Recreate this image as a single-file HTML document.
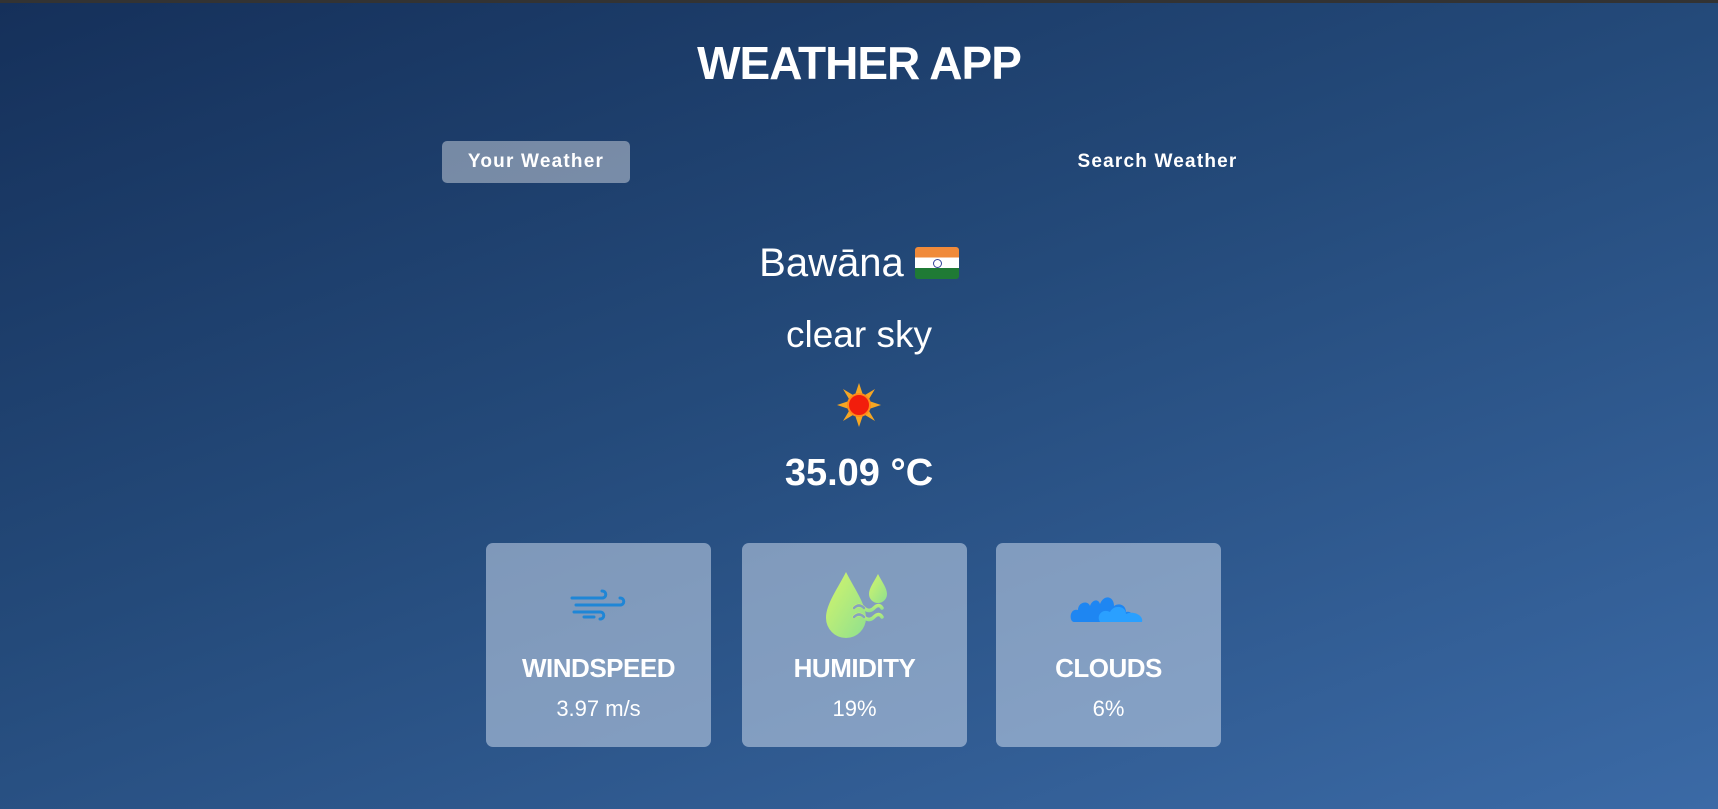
<!DOCTYPE html>
<html><head><meta charset="utf-8"><style>
html,body{margin:0;padding:0;width:1718px;height:809px;overflow:hidden;box-sizing:border-box}
body{background:linear-gradient(160deg,#15305a 0%,#244a7a 45%,#3b6aa6 100%);font-family:"Liberation Sans",sans-serif;color:#fff;position:relative;border-top:3px solid #333}
.a{position:absolute;left:0;width:1718px;text-align:center}
h1{margin:0;font-size:46px;font-weight:bold;letter-spacing:-1px}
.btn{position:absolute;left:442px;top:138px;width:188px;height:42px;border-radius:5px;background:rgba(255,255,255,0.4);font-size:19px;letter-spacing:1.2px;line-height:42px;text-align:center;font-weight:bold}
.srch{position:absolute;left:1040px;top:138px;width:235px;line-height:42px;font-size:19px;letter-spacing:1.2px;text-align:center;font-weight:bold}
.card{position:absolute;top:540px;width:225px;height:204px;border-radius:7px;background:rgba(200,215,235,0.55);text-align:center}
.card .l{position:absolute;top:110px;width:100%;font-size:26px;font-weight:bold;letter-spacing:-0.5px}
.card .v{position:absolute;top:153px;width:100%;font-size:22px}
.card svg{position:absolute;left:0;right:0;margin:auto}
</style></head><body>
<div class="a" style="top:33px"><h1>WEATHER APP</h1></div>
<div class="btn">Your Weather</div>
<div class="srch">Search Weather</div>
<div class="a" style="top:238px;font-size:40px">Bawāna <span style="display:inline-block;width:44px;height:32px;vertical-align:-3px;background:linear-gradient(#f08a3a 0 33%,#fff 33% 66%,#1f7a35 66%);border-radius:3px;position:relative"><span style="position:absolute;left:18px;top:12px;width:7px;height:7px;border:1px solid #33449a;border-radius:50%"></span></span></div>
<div class="a" style="top:311px;font-size:37px">clear sky</div>
<div class="a" style="top:380px"><svg width="44" height="44" viewBox="0 0 44 44"><g fill="#f5a623"><polygon points="22,0 26,12 18,12"/><polygon points="22,44 26,32 18,32"/><polygon points="0,22 12,18 12,26"/><polygon points="44,22 32,18 32,26"/><polygon points="6,6 16,12 12,16"/><polygon points="38,38 28,32 32,28"/><polygon points="38,6 32,16 28,12"/><polygon points="6,38 12,28 16,32"/></g><circle cx="22" cy="22" r="11" fill="#f21d0c"/><circle cx="22" cy="22" r="11" fill="none" stroke="#ff8a1a" stroke-width="2"/></svg></div>
<div class="a" style="top:449px;font-size:38px;font-weight:bold">35.09 °C</div>

<div class="card" style="left:486px">
<svg style="top:45px" width="58" height="36" viewBox="0 0 58 36" fill="none" stroke="#1f86d6" stroke-width="3" stroke-linecap="round"><path d="M2 10h30c5 0 5-7 0-7"/><path d="M6 17h44c5 0 5-7 0-7"/><path d="M4 24h26c5 0 5 7 0 7"/><path d="M14 29h10"/></svg>
<div class="l">WINDSPEED</div><div class="v">3.97 m/s</div></div>

<div class="card" style="left:742px">
<svg style="top:27px" width="70" height="70" viewBox="0 0 70 70"><defs><linearGradient id="g" x1="0" y1="0" x2="1" y2="1"><stop offset="0" stop-color="#d4f56a"/><stop offset="1" stop-color="#8fe08f"/></linearGradient></defs><path d="M26 2C18 18 6 34 6 48a20 20 0 0 0 40 0C46 34 34 18 26 2z" fill="url(#g)"/><path d="M58 4c-4 8-9 14-9 20a9 9 0 0 0 18 0c0-6-5-12-9-20z" fill="url(#g)"/><g fill="none" stroke="url(#g)" stroke-width="3.5" stroke-linecap="round"><path d="M34 38q5-5 10 0t10 0t8 0"/><path d="M34 47q5-5 10 0t10 0t8 0"/></g><g fill="none" stroke="#86a2c0" stroke-width="2.5" stroke-linecap="round"><path d="M34 38q5-5 10 0"/><path d="M34 47q5-5 10 0"/></g></svg>
<div class="l">HUMIDITY</div><div class="v">19%</div></div>

<div class="card" style="left:996px">
<svg style="top:45px" width="78" height="36" viewBox="0 0 78 36"><path d="M4 34c-5 0-5-14 4-12 0-8 10-10 12-4 2-6 8-8 10-2 4-10 14-8 14 2 6-4 12 0 12 6 8-2 10 10 4 10z" fill="#1e86f2"/><path d="M30 34c-4-6 2-14 10-10 4-8 16-6 16 2 8-4 18 2 16 8z" fill="#2aa0ff"/></svg>
<div class="l">CLOUDS</div><div class="v">6%</div></div>
</body></html>
